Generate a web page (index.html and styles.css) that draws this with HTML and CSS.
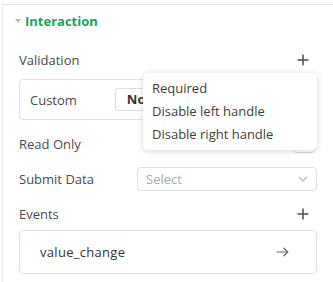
FILE: index.html
```html
<!DOCTYPE html>
<html lang="en">
<head>
    <meta charset="UTF-8">
    <title>Interaction</title>
    <link rel="stylesheet" href="styles.css">
</head>
<body>
    <div class="panel">
        <div class="section-head">
            <span class="caret"></span>
            <span class="section-title">Interaction</span>
        </div>

        <div class="section-body">
            <div class="row">
                <span class="label">Validation</span>
                <svg class="plus" width="12" height="12" viewBox="0 0 12 12"><path d="M6 0.5v11M0.5 6h11" stroke="#4b4b4b" stroke-width="1.5" fill="none"/></svg>
            </div>
            <div class="rule-box">
                <span class="rule-name">Custom</span>
                <span class="rule-value">No</span>
            </div>

            <div class="row row-read">
                <span class="label">Read Only</span>
                <span class="toggle"></span>
            </div>

            <div class="row row-submit">
                <span class="label">Submit Data</span>
                <div class="select">
                    <span>Select</span>
                    <svg width="10" height="6" viewBox="0 0 10 6"><path d="M1 1l4 4 4-4" stroke="#b5b5b5" stroke-width="1.2" fill="none"/></svg>
                </div>
            </div>

            <div class="row row-events">
                <span class="label">Events</span>
                <svg class="plus" width="12" height="12" viewBox="0 0 12 12"><path d="M6 0.5v11M0.5 6h11" stroke="#4b4b4b" stroke-width="1.5" fill="none"/></svg>
            </div>
            <div class="event-box">
                <span>value_change</span>
                <svg width="13" height="10" viewBox="0 0 13 10"><path d="M0.5 5h11.5M7.5 0.8l4.3 4.2-4.3 4.2" stroke="#6b6b6b" stroke-width="1.2" fill="none"/></svg>
            </div>
        </div>

        <ul class="menu">
            <li>Required</li>
            <li>Disable left handle</li>
            <li>Disable right handle</li>
        </ul>
    </div>
</body>
</html>
```

FILE: styles.css
```css
body {
    margin: 0;
    background: #fff;
    font-family: "Open Sans", Arial, sans-serif;
    font-size: 13px;
    color: #4a4a4a;
}
.panel {
    position: relative;
    margin: 4px 0 0 2px;
    height: 277px;
    border-top: 1px solid #e4e4e4;
    border-left: 1px solid #ebebeb;
}
.section-head {
    height: 32px;
    display: flex;
    align-items: center;
    padding-left: 12px;
    gap: 4px;
}
.caret {
    width: 0;
    height: 0;
    border-left: 3px solid transparent;
    border-right: 3px solid transparent;
    border-top: 4px solid #b8b8b8;
}
.section-title {
    color: #24a05a;
    font-weight: 700;
}
.section-body {
    padding: 0 16px;
}
.row {
    height: 24px;
    display: flex;
    align-items: center;
    justify-content: space-between;
    margin-top: 11px;
}
.plus {
    margin-right: 8px;
}
.rule-box {
    margin-top: 7px;
    height: 41px;
    box-sizing: border-box;
    border: 1px solid #e2e2e2;
    border-radius: 4px;
    display: flex;
    align-items: center;
    padding-left: 10px;
    gap: 38px;
}
.rule-value {
    height: 23px;
    width: 80px;
    box-sizing: border-box;
    border: 1px solid #dcdcdc;
    border-radius: 3px;
    padding-left: 11px;
    font-weight: 700;
    color: #333;
    line-height: 21px;
}
.row-read {
    margin-top: 12px;
}
.toggle {
    width: 22px;
    height: 16px;
    border: 1px solid #dadada;
    border-radius: 5px;
    margin-right: 1px;
}
.select {
    width: 180px;
    height: 24px;
    box-sizing: border-box;
    border: 1px solid #e0e0e0;
    border-radius: 4px;
    display: flex;
    align-items: center;
    justify-content: space-between;
    padding: 0 8px;
    color: #a9a9a9;
}
.event-box {
    margin-top: 4px;
    height: 44px;
    box-sizing: border-box;
    border: 1px solid #e2e2e2;
    border-radius: 4px;
    display: flex;
    align-items: center;
    justify-content: space-between;
    padding: 0 27px 0 20px;
    color: #333;
    letter-spacing: 0.3px;
}
.menu {
    position: absolute;
    left: 140px;
    top: 68px;
    width: 174px;
    margin: 0;
    padding: 4px 0;
    list-style: none;
    background: #fff;
    border-radius: 5px;
    box-shadow: 0 1px 6px rgba(0, 0, 0, 0.16);
}
.menu li {
    height: 23px;
    line-height: 23px;
    padding-left: 9px;
    color: #3d3d3d;
}
```
